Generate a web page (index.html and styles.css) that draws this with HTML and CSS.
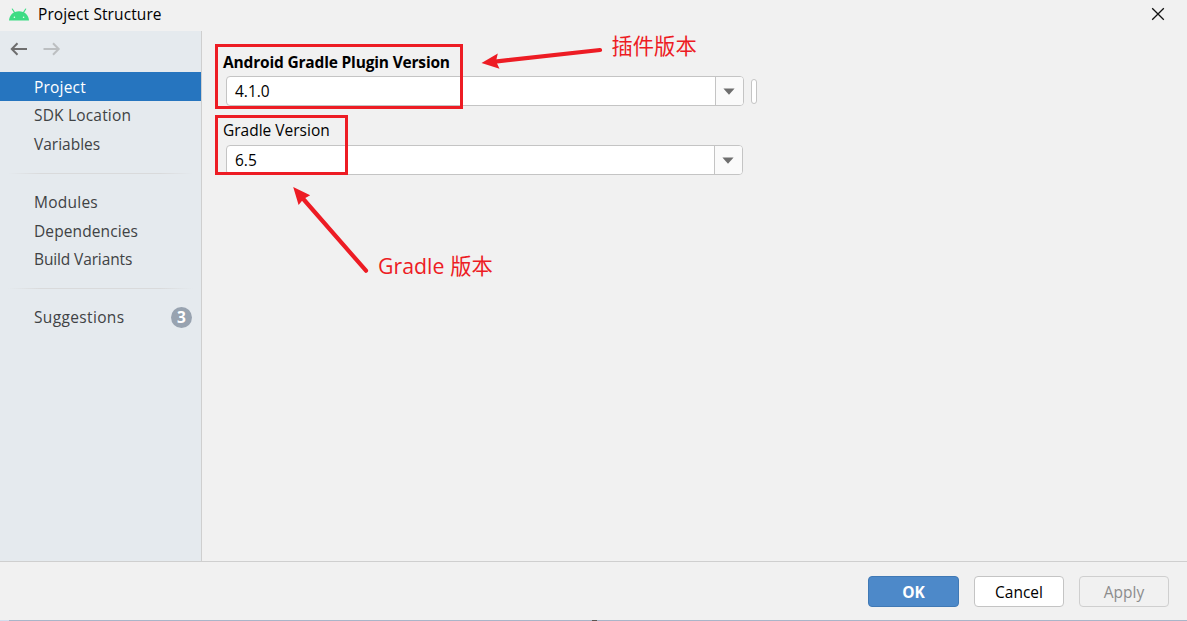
FILE: index.html
```
<!DOCTYPE html>
<html lang="en">
<head>
<meta charset="utf-8">
<title>Project Structure</title>
<link rel="stylesheet" href="styles.css">
</head>
<body>
<div class="window">
  <header class="titlebar">
    <svg class="logo" width="20" height="13" viewBox="0 0 20 13">
      <path d="M3.3 1 L5.6 4.6 M16.7 1 L14.4 4.6" stroke="#3ddc84" stroke-width="1.1" stroke-linecap="round"/>
      <path d="M0 12.5 C.4 7 4.3 3.2 10 3.2 S19.6 7 20 12.5 Z" fill="#3ddc84"/>
      <circle cx="5.4" cy="9.2" r=".8" fill="#e9fff2"/><circle cx="14.6" cy="9.2" r=".8" fill="#e9fff2"/>
    </svg>
    <h1 class="title">Project Structure</h1>
    <svg class="close" width="14" height="14" viewBox="0 0 14 14"><path d="M1.2 1.2 L12.8 12.8 M12.8 1.2 L1.2 12.8" stroke="#111" stroke-width="1.3"/></svg>
  </header>
  <div class="body">
    <nav class="sidebar">
      <div class="history">
        <svg width="18" height="14" viewBox="0 0 18 14" fill="none" stroke="#6e6e6e" stroke-width="2"><path d="M17 7 H2 M7.5 1.3 L1.8 7 L7.5 12.7"/></svg>
        <svg width="18" height="14" viewBox="0 0 18 14" fill="none" stroke="#bcbfc1" stroke-width="2"><path d="M.5 7 H15.5 M10 1.3 L15.7 7 L10 12.7"/></svg>
      </div>
      <div class="item selected"><span class="t-project">Project</span></div>
      <div class="item"><span class="t-sdk">SDK Location</span></div>
      <div class="item"><span class="t-variables">Variables</span></div>
      <div class="separator"></div>
      <div class="item"><span class="t-modules">Modules</span></div>
      <div class="item"><span class="t-dependencies">Dependencies</span></div>
      <div class="item"><span class="t-variants">Build Variants</span></div>
      <div class="separator"></div>
      <div class="item"><span class="t-suggestions">Suggestions</span><span class="count">3</span></div>
    </nav>
    <main class="content">
      <div class="label label-strong">Android Gradle Plugin Version</div>
      <div class="row">
        <div class="combo combo-plugin"><span class="value">4.1.0</span><span class="toggle"><svg width="12" height="7" viewBox="0 0 12 7"><path d="M.4 .5 H11.6 L6 6.8 Z" fill="#6e6e6e"/></svg></span></div>
        <div class="pill"></div>
      </div>
      <div class="label label-gradle">Gradle Version</div>
      <div class="row">
        <div class="combo combo-gradle"><span class="value">6.5</span><span class="toggle"><svg width="12" height="7" viewBox="0 0 12 7"><path d="M.4 .5 H11.6 L6 6.8 Z" fill="#6e6e6e"/></svg></span></div>
      </div>
    </main>
  </div>
  <footer class="footer">
    <button class="button ok">OK</button>
    <button class="button cancel">Cancel</button>
    <button class="button apply">Apply</button>
  </footer>
  <div class="edge"><span class="edge-start"></span><span class="edge-mark"></span></div>

  <div class="frame frame-plugin"></div>
  <div class="frame frame-gradle"></div>
  <svg class="arrows" width="1187" height="621" viewBox="0 0 1187 621">
    <g stroke="#ed1c24" stroke-width="4.2" stroke-linecap="round">
      <path d="M495 61.6 L600 50"/><path d="M302 197.5 L366 270.7"/>
    </g>
    <path fill="#ed1c24" d="M481.5 63 L497.8 53.5 L496 61.3 L499.5 68.8 Z M293.2 187 L310.2 195.3 L303.5 199 L298.6 205 Z"/>
  </svg>
  <div class="note note-plugin">插件版本</div>
  <div class="note note-gradle"><span class="note-latin">Gradle</span> 版本</div>
</div>
</body>
</html>
```
FILE: styles.css
```
* { box-sizing: border-box; }
body { margin: 0; }
.window {
  position: relative;
  display: flex;
  flex-direction: column;
  width: 1187px;
  height: 621px;
  overflow: hidden;
  background: #f1f1f1;
  color: #000;
  font: 15.5px/20px "Open Sans", "Noto Sans", sans-serif;
  white-space: nowrap;
}
.titlebar { display: flex; align-items: center; height: 31px; padding: 0 22px 3px 9px; }
.title { flex: 1; margin: 0 0 0 9px; font-size: 15.5px; font-weight: 400; letter-spacing: .1px; }
.body { display: flex; height: 530px; }
.sidebar { width: 202px; background: #e5eaee; border-right: 1px solid #cfcfcf; color: #404244; }
.history { display: flex; gap: 15px; height: 41px; padding: 11px 0 0 9.5px; }
.item { display: flex; align-items: center; justify-content: space-between; height: 28.8px; padding: .5px 9px 0 34px; }
.selected { padding-top: 1.5px; background: #2675bf; color: #fff; }
.t-project { letter-spacing: .2px; }
.t-sdk { letter-spacing: .18px; }
.t-modules { letter-spacing: .25px; }
.t-dependencies { letter-spacing: .1px; }
.t-variants { letter-spacing: -.13px; }
.t-suggestions { letter-spacing: .35px; }
.count { width: 21px; height: 21px; border-radius: 50%; background: #98a3b0; color: #fff; font-weight: 700; text-align: center; }
.separator { height: 28.8px; margin: 0 8px; background: linear-gradient(90deg, #d9d9d900, #d9dadb 18%, #d9dadb 82%, #d9d9d900) 0 14.5px / 100% 1px no-repeat; }
.content { flex: 1; padding: 21px 0 0 21px; }
.label { height: 25px; }
.label-strong { font-weight: 700; letter-spacing: -.18px; }
.label-gradle { margin-top: 14px; }
.row { display: flex; align-items: center; gap: 7px; padding-left: 3px; }
.combo { display: flex; height: 30px; border: 1px solid #c4c4c4; border-radius: 4px; background: #fff; overflow: hidden; }
.combo-plugin { width: 518px; margin-top: -1px; }
.combo-gradle { width: 517px; }
.value { flex: 1; padding: 3.5px 8px; }
.toggle { display: flex; align-items: center; justify-content: center; width: 28px; padding-right: 1px; border-left: 1px solid #c4c4c4; background: #fafafa; }
.pill { width: 6px; height: 25px; border: 1px solid #c4c4c4; border-radius: 3px; background: #fff; }
.footer { display: flex; justify-content: flex-end; gap: 15px; height: 59px; padding: 14px 18px 0 0; border-top: 1px solid #cfcfcf; }
.button { width: 90px; height: 31px; padding: 1px 0 0; border: 1px solid #c4c4c4; border-radius: 4px; font: inherit; line-height: 20px; }
.ok { width: 91px; border-color: #4079b5; background: #4d89c9; color: #fff; font-weight: 700; }
.cancel { background: #fff; color: #000; }
.apply { border-color: #cfcfcf; background: #f1f1f1; color: #8c8c8c; }
.edge { display: flex; height: 1px; background: #a9b5c9; }
.edge-start { width: 9px; background: #d3deee; }
.edge-mark { width: 5px; margin-left: 583px; background: #5b5550; }
.frame { position: absolute; left: 215px; border: 3px solid #ed1c24; }
.frame-plugin { top: 44px; width: 248px; height: 65px; }
.frame-gradle { top: 115px; width: 133px; height: 60px; }
.arrows { position: absolute; left: 0; top: 0; pointer-events: none; }
.note { position: absolute; color: #ed1c24; font: 400 21.3px/30px "Noto Sans CJK SC", sans-serif; }
.note-plugin { left: 611.5px; top: 30px; }
.note-gradle { left: 378px; top: 250px; }
.note-latin { margin-right: 1px; font-family: "Open Sans", "Noto Sans", sans-serif; }
```
